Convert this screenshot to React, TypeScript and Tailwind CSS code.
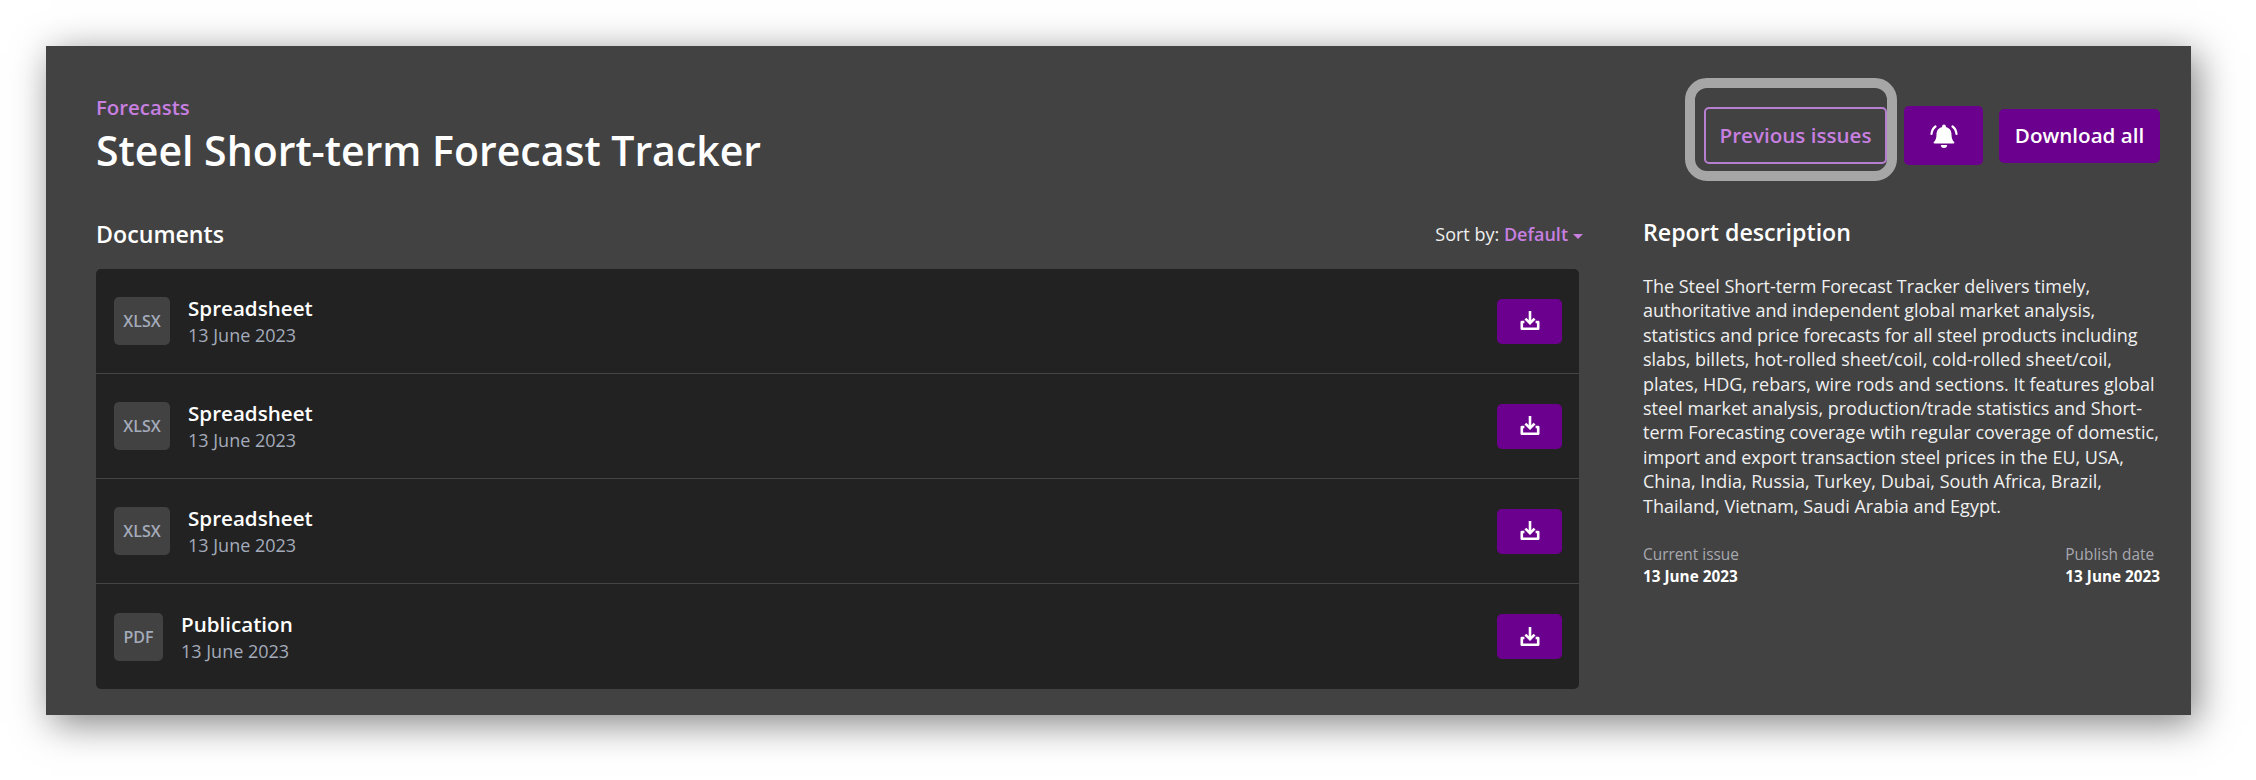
const font = "font-['Open_Sans',sans-serif]"

const docs = [
  { type: 'XLSX', title: 'Spreadsheet', date: '13 June 2023' },
  { type: 'XLSX', title: 'Spreadsheet', date: '13 June 2023' },
  { type: 'XLSX', title: 'Spreadsheet', date: '13 June 2023' },
  { type: 'PDF', title: 'Publication', date: '13 June 2023' },
]

function DownloadIcon() {
  return (
    <svg width="20" height="20" viewBox="0 0 20 20" fill="none" stroke="currentColor" strokeWidth="2.6">
      <path d="M10 0v12" />
      <path d="M5.400 7.600L10 12.200l4.600-4.600" />
      <path d="M4.400 11H1.800v6.800h16.400V11h-2.600" strokeLinejoin="round" />
    </svg>
  )
}

function BellIcon() {
  return (
    <svg width="28" height="26" viewBox="0 0 28 26" fill="currentColor">
      <path d="M14 1.500c1.100 0 1.900.8 1.900 1.900v.6c3.500.8 5.600 3.600 5.600 7.200 0 4.200 1 6 2.700 7.800.4.5.2 1.500-.7 1.500H4.500c-.9 0-1.100-1-.7-1.500 1.700-1.800 2.700-3.600 2.700-7.800 0-3.600 2.100-6.400 5.600-7.200v-.6c0-1.100.8-1.900 1.900-1.900z" />
      <path d="M10.800 22h6.400c0 1.800-1.400 3-3.200 3s-3.200-1.200-3.200-3z" />
      <path d="M5.500 3.500C3.200 5.200 1.800 7.800 1.500 11M22.500 3.500c2.300 1.700 3.700 4.300 4 7.500" fill="none" stroke="currentColor" strokeWidth="2.200" strokeLinecap="round" />
    </svg>
  )
}

function DocRow({ type, title, date, last }: { type: string; title: string; date: string; last: boolean }) {
  return (
    <div className={`flex h-[105px] items-center justify-between pl-[18px] pr-[17px] ${last ? '' : 'border-b border-[#444444]'}`}>
      <div className="flex items-center gap-[18px]">
        <div className={`flex h-[48px] items-center justify-center rounded-[5px] bg-[#424242] text-[16px] font-semibold text-[#a4abba] ${type === 'PDF' ? 'w-[49px]' : 'w-[56px]'}`}>
          {type}
        </div>
        <div>
          <div className="text-[20.6px] leading-[28px] font-semibold text-white">{title}</div>
          <div className="text-[18px] leading-[26px] text-[#a4abba]">{date}</div>
        </div>
      </div>
      <button className="flex h-[45px] w-[65px] items-center justify-center rounded-[5px] bg-[#6c008e] text-white">
        <DownloadIcon />
      </button>
    </div>
  )
}

export default function App() {
  return (
    <div className={`h-[780px] w-[2256px] overflow-hidden bg-white pl-[46px] pt-[46px] ${font}`}>
      <div className="h-[669px] w-[2145px] bg-[#424242] pl-[50px] pr-[31px] pt-[47px] shadow-[6px_8px_36px_rgba(0,0,0,0.5)]">
        {/* header */}
        <div className="flex items-start justify-between">
          <div>
            <div className="text-[20.4px] leading-[28px] font-semibold text-[#c77fe0]">Forecasts</div>
            <h1 className="mt-[2px] text-[41px] leading-[54px] font-semibold text-white">Steel Short-term Forecast Tracker</h1>
          </div>
          <div className="mt-[13px] flex items-center">
            <div className="relative mr-[17px]">
              <button className="flex h-[57px] w-[183px] items-center justify-center rounded-[5px] border-2 border-[#b77fd0] text-[20.6px] font-semibold text-[#c77fe0]">
                Previous issues
              </button>
              <div className="pointer-events-none absolute -bottom-[17px] -left-[19px] -right-[10px] -top-[29px] rounded-[22px] border-[10px] border-[#a6a6a6]" />
            </div>
            <button className="mr-[16px] flex h-[59px] w-[79px] items-center justify-center rounded-[5px] bg-[#6c008e] text-white">
              <BellIcon />
            </button>
            <button className="h-[54px] w-[161px] rounded-[5px] bg-[#6c008e] text-[20.6px] font-semibold text-white">
              Download all
            </button>
          </div>
        </div>

        {/* body */}
        <div className="mt-[41px] flex items-start">
          <div className="w-[1483px]">
            <div className="flex h-[33px] items-center justify-between">
              <h2 className="text-[23.2px] font-semibold text-white">Documents</h2>
              <div className="-mr-[4px] text-[18px] text-[#f0f0f0]">
                Sort by: <span className="font-semibold text-[#c77fe0]">Default</span>
                <span className="ml-[5px] inline-block border-x-[5px] border-t-[5px] border-x-transparent border-t-[#c77fe0] align-middle" />
              </div>
            </div>
            <div className="mt-[18px] overflow-hidden rounded-[5px] bg-[#222222]">
              {docs.map((d, i) => (
                <DocRow key={i} {...d} last={i === docs.length - 1} />
              ))}
            </div>
          </div>

          <div className="ml-[64px] w-[517px]">
            <h2 className="-mt-[2px] text-[23.2px] leading-[33px] font-semibold text-white">Report description</h2>
            <p className="mt-[25px] text-[18px] leading-[24.4px] text-[#f0f0f0]">
              The Steel Short-term Forecast Tracker delivers timely, authoritative and independent global market analysis, statistics and price forecasts for all steel products including slabs, billets, hot-rolled sheet/coil, cold-rolled sheet/coil, plates, HDG, rebars, wire rods and sections. It features global steel market analysis, production/trade statistics and Short-term Forecasting coverage wtih regular coverage of domestic, import and export transaction steel prices in the EU, USA, China, India, Russia, Turkey, Dubai, South Africa, Brazil, Thailand, Vietnam, Saudi Arabia and Egypt.
            </p>
            <div className="mt-[26px] flex justify-between">
              <div>
                <div className="text-[15.4px] leading-[21px] text-[#a8a8b0]">Current issue</div>
                <div className="text-[15.3px] leading-[22px] font-bold text-white">13 June 2023</div>
              </div>
              <div>
                <div className="text-[15.4px] leading-[21px] text-[#a8a8b0]">Publish date</div>
                <div className="text-[15.3px] leading-[22px] font-bold text-white">13 June 2023</div>
              </div>
            </div>
          </div>
        </div>
      </div>
    </div>
  )
}
